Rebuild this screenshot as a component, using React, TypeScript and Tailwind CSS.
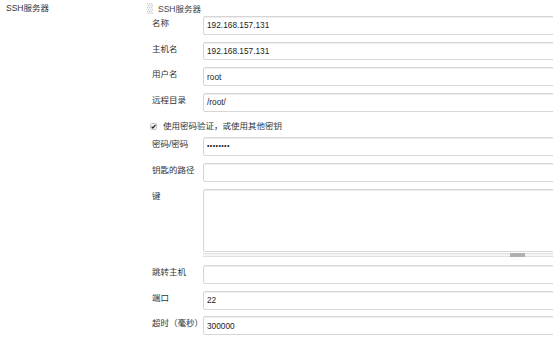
// SSH server config block, Jenkins-style form: label column + full-width inputs.

const FONT = { fontFamily: '"Liberation Sans", "Noto Sans CJK SC", sans-serif' };

function Grip() {
  return (
    <svg width="6" height="11" viewBox="0 0 6 11" className="shrink-0">
      {Array.from({ length: 6 }).map((_, r) =>
        Array.from({ length: 3 }).map((__, c) => (
          <rect key={`${r}-${c}`} x={c * 2 + (r % 2)} y={r * 2} width="1" height="1" fill="#b8b8b8" />
        )),
      )}
      <rect x="0" y="0" width="6" height="11" fill="#e6e6e6" opacity="0.5" />
    </svg>
  );
}

function Field({ label, value, h = 'h-[18.7px]', mt = 'mt-[7px]', dots = false }: {
  label: string;
  value?: string;
  h?: string;
  mt?: string;
  dots?: boolean;
}) {
  return (
    <div className={`flex items-start ${mt}`}>
      <div className="w-[56px] shrink-0 pl-[5px] pt-[1px] leading-[12px] whitespace-nowrap">{label}</div>
      <div
        className={`w-[360px] shrink-0 ${h} rounded-[2px] border border-[#d6d6d6] bg-white pl-[3px] shadow-[inset_0_1px_1px_rgba(0,0,0,0.07)] flex items-center`}
      >
        {dots ? (
          <span className="text-[7px] tracking-[0.4px] text-[#222]">••••••••</span>
        ) : (
          <span className="text-[8.3px] text-[#222]">{value}</span>
        )}
      </div>
    </div>
  );
}

export default function App() {
  return (
    <div
      className="relative flex h-[339px] w-[553px] overflow-hidden bg-white text-[8.5px] text-[#333]"
      style={FONT}
    >
      <div className="w-[147px] shrink-0 pl-[6px] pt-[2px] leading-[12px]">SSH服务器</div>

      <div className="flex flex-col">
        <div className="flex h-[16px] items-center gap-[5px] pt-[1px]">
          <Grip />
          <span className="leading-[12px] text-[#444]">SSH服务器</span>
        </div>

        <Field label="名称" value="192.168.157.131" mt="mt-0" />
        <Field label="主机名" value="192.168.157.131" />
        <Field label="用户名" value="root" />
        <Field label="远程目录" value="/root/" />

        <div className="flex h-[25px] items-center gap-[6px] pl-[3px] pt-[4px]">
          <svg width="7" height="7" viewBox="0 0 7 7">
            <rect x="0.5" y="0.5" width="6" height="6" rx="1" fill="#f4f4f4" stroke="#c4c4c4" />
            <path d="M1.6 3.6 L2.9 5 L5.5 1.8" fill="none" stroke="#222" strokeWidth="1.2" />
          </svg>
          <span className="leading-[12px]">使用密码验证，或使用其他密钥</span>
        </div>

        <Field label="密码/密码" dots h="h-[19px]" mt="mt-0" />
        <Field label="钥匙的路径" h="h-[19px]" />
        <Field label="键" h="h-[63px]" />

        <div className="mt-[1.5px] flex">
          <div className="w-[56px] shrink-0" />
          <div className="relative h-[4px] w-[360px] shrink-0 border-y border-[#e0e0e0] bg-[#f4f4f4]">
            <div className="absolute left-[307px] top-[-1px] h-[4px] w-[15px] bg-[#b0b0b0]" />
          </div>
        </div>

        <Field label="跳转主机" h="h-[19px]" mt="mt-[7.7px]" />
        <Field label="端口" value="22" h="h-[19px]" />
        <Field label="超时（毫秒）" value="300000" h="h-[19px]" mt="mt-[6.5px]" />
      </div>
    </div>
  );
}
